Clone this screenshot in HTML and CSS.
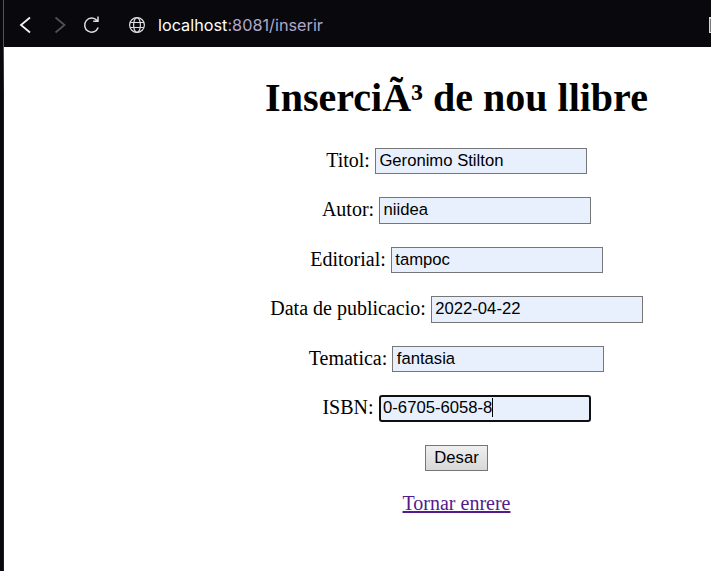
FILE: index.html
```html
<!DOCTYPE html>
<html lang="ca">
<head>
<meta charset="utf-8">
<title>Inserció</title>
<link rel="stylesheet" href="styles.css">
</head>
<body>
<div class="window">
  <header class="toolbar">
    <svg class="icon" width="20" height="24" viewBox="0 0 20 24"><path d="M14 4.5 5 12 14 19.5" stroke="#f2f2f4" stroke-width="1.8"/></svg>
    <svg class="icon forward" width="20" height="24" viewBox="0 0 20 24"><path d="M5.5 4.5 14.5 12 5.5 19.5" stroke="#505055" stroke-width="1.8"/></svg>
    <svg class="icon reload" width="20" height="24" viewBox="0 0 20 24"><path d="M15 7.6A7 7 0 1 0 16.2 14.6M16 3.4V8.3H11.2" stroke="#dedee2" stroke-width="1.5"/></svg>
    <svg class="icon globe" width="18" height="24" viewBox="0 0 18 24"><g stroke="#dedee2" stroke-width="1.2"><circle cx="9" cy="12" r="7.4"/><ellipse cx="9" cy="12" rx="3.4" ry="7.4"/><path d="M2.2 9.5H15.8M2.2 14.5H15.8"/></g></svg>
    <div class="address"><b>localhost</b>:8081/inserir</div>
    <span class="clipped"></span>
  </header>
  <main class="page">
    <h1>InserciÃ³ de nou llibre</h1>
    <form class="form">
      <label class="row"><span class="name">Titol:</span><span class="field">Geronimo Stilton</span></label>
      <label class="row"><span class="name">Autor:</span><span class="field">niidea</span></label>
      <label class="row"><span class="name">Editorial:</span><span class="field">tampoc</span></label>
      <label class="row"><span class="name">Data de publicacio:</span><span class="field">2022-04-22</span></label>
      <label class="row"><span class="name">Tematica:</span><span class="field">fantasia</span></label>
      <label class="row"><span class="name">ISBN:</span><span class="field focused">0-6705-6058-8<i class="caret"></i></span></label>
      <div class="row"><button type="button">Desar</button></div>
    </form>
    <a href="#">Tornar enrere</a>
  </main>
</div>
</body>
</html>
```
FILE: styles.css
```css
* { box-sizing: border-box; }
body {
  margin: 0;
  overflow: hidden;
  background: #09080d;
}
.window {
  height: 571px;
  padding-left: 3px;
}
.toolbar {
  display: flex;
  align-items: center;
  height: 47px;
  padding: 3px 0 0 12px;
  border-left: 1px solid #c41d43;
  background: #09080d;
}
.icon { flex: none; fill: none; }
.forward { margin-left: 14px; }
.reload { margin-left: 12px; }
.globe { margin-left: 26px; }
.address {
  margin-left: 12px;
  font: 16.25px/24px Inter, sans-serif;
  color: #b1a7ca;
  white-space: nowrap;
}
.address b { font-weight: 400; color: #fff; }
.clipped {
  flex: none;
  width: 2px;
  height: 16px;
  margin-left: auto;
  border: solid #d6d6d9;
  border-width: 2px 0 1px 1px;
  background: #77777b;
}
.page {
  height: 524px;
  padding: 28px 0 0 197px;
  border-left: 1px solid;
  border-image: linear-gradient(#c41d43, #2b151b 50px) 1;
  background: #fff;
  color: #000;
  text-align: center;
  font: 20px/23px "Liberation Serif", serif;
}
h1 {
  margin: 0;
  font-size: 40px;
  line-height: 46px;
  font-weight: 700;
}
.page > h1,
.form {
  width: 511px;
}
.form {
  display: grid;
  grid-auto-rows: 49.45px;
  margin-top: 15.3px;
}
.row {
  display: flex;
  justify-content: center;
  align-items: center;
  gap: 5px;
}
.name { margin-bottom: 1.4px; }
.field {
  width: 212px;
  height: 26.5px;
  padding: 0 3.5px;
  border: 1px solid #767676;
  background: #e8f0fe;
  text-align: left;
  font: 16.67px/23px "Liberation Sans", sans-serif;
  white-space: nowrap;
}
.focused {
  border: 2px solid #101010;
  border-radius: 3px;
  height: 27px;
  padding: 0 2.5px;
  line-height: 21px;
}
.caret {
  display: inline-block;
  width: 1px;
  height: 19px;
  margin: -2px 0 0;
  background: #000;
  vertical-align: -4px;
}
button {
  width: 63px;
  height: 26px;
  padding: 0;
  border: 1px solid #767676;
  border-radius: 0;
  background: linear-gradient(#efefef, #d8d8d8);
  color: #000;
  font: 16.67px/22px "Liberation Sans", sans-serif;
}
a {
  display: inline-block;
  margin: 9.5px 0 0 1px;
  color: #551a8b;
}
```
